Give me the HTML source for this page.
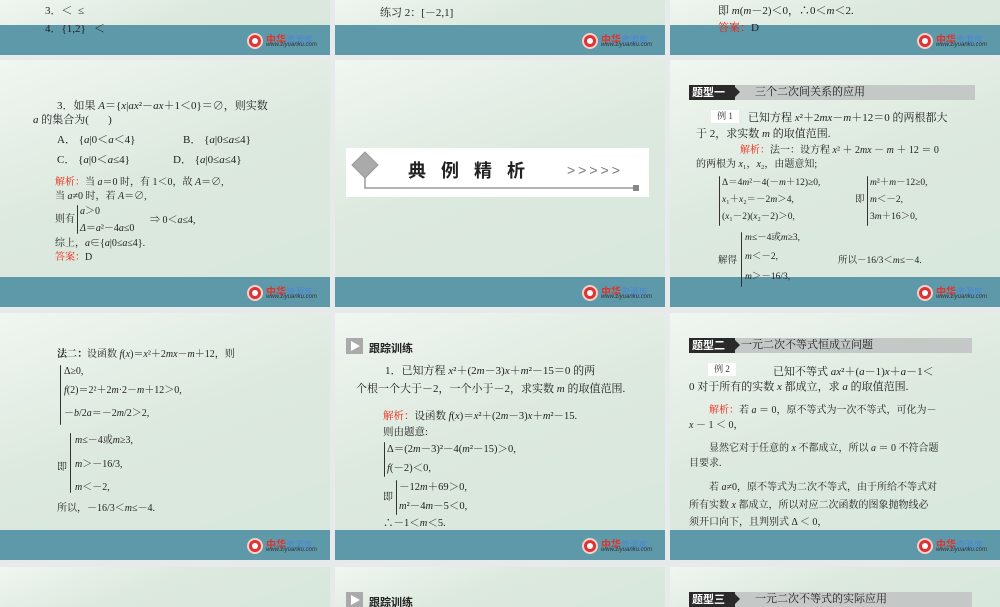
<!DOCTYPE html><html><head><meta charset="utf-8"><style>
*{margin:0;padding:0;box-sizing:border-box}
body{width:1000px;height:600px;background:#e6eaea;position:relative;overflow:hidden;font-family:"Liberation Serif","Noto Serif CJK SC",serif;font-size:11px;color:#222}
.s{position:absolute;width:330px;background:linear-gradient(160deg,#f0f6f0 0%,#dde9df 45%,#d7e7dc 100%);overflow:hidden}
.bar{position:absolute;left:0;width:330px;height:30px;background:#5d99a8}
.logo{position:absolute;left:247px;top:8px;width:80px;height:16px}
.logo .c{position:absolute;left:0;top:0;width:16px;height:16px;border-radius:50%;background:#d33;border:2px solid #f6d0c8}
.logo .c:after{content:"";position:absolute;left:3px;top:3px;width:6px;height:6px;border-radius:50%;background:#fff}
.logo .t1{position:absolute;left:19px;top:-2px;font:bold 10px "Noto Sans CJK SC",sans-serif;color:#d33;white-space:nowrap}
.logo .t1 b{color:#4a86d8;font-weight:normal;font-size:9px}
.logo .t2{position:absolute;left:19px;top:9px;font:italic 6px "Liberation Sans",sans-serif;color:#333}
.t{position:absolute;white-space:nowrap;line-height:13px}
.r{color:#e21}
i{font-style:italic}
.br{position:absolute;border-left:1px solid #333;border-radius:5px 0 0 5px}
.hd{position:absolute;height:15px;background:#c4c8c6}
.hd .k{position:absolute;left:0;top:0;width:46px;height:15px;background:#2a2a2a;color:#fff;font-size:11px;line-height:15px;padding-left:3px;font-family:"Noto Sans CJK SC",sans-serif;font-weight:bold}
.hd .k:after{content:"";position:absolute;right:-5px;top:2px;border-left:5px solid #2a2a2a;border-top:5px solid transparent;border-bottom:5px solid transparent}
.hd .x{position:absolute;left:66px;top:0;line-height:15px;font-size:11px}
.ex{position:absolute;width:28px;height:13px;background:#fff;font-size:9px;line-height:13px;text-align:center;color:#333}
.tr{position:absolute;width:17px;height:16px;background:#aaa}
.tr:after{content:"";position:absolute;left:5px;top:3px;border-left:9px solid #fff;border-top:5px solid transparent;border-bottom:5px solid transparent}
</style></head><body>

<!-- row0 -->
<div class="s" style="left:0;top:0;height:55px"><div class="bar" style="top:25px"><div class="logo"><div class="c"></div><div class="t1">中华<b>资源库</b></div><div class="t2">www.ziyuanku.com</div></div></div>
<div class="t" style="left:45px;top:5px">3．＜ &nbsp;≤</div><div class="t" style="left:45px;top:23px">4．{1,2} &nbsp; ＜</div></div>
<div class="s" style="left:335px;top:0;height:55px"><div class="bar" style="top:25px"><div class="logo"><div class="c"></div><div class="t1">中华<b>资源库</b></div><div class="t2">www.ziyuanku.com</div></div></div>
<div class="t" style="left:45px;top:7px">练习 2：[－2,1]</div></div>
<div class="s" style="left:670px;top:0;height:55px"><div class="bar" style="top:25px"><div class="logo"><div class="c"></div><div class="t1">中华<b>资源库</b></div><div class="t2">www.ziyuanku.com</div></div></div>
<div class="t" style="left:48px;top:5px">即 <i>m</i>(<i>m</i>－2)＜0，∴0＜<i>m</i>＜2.</div><div class="t" style="left:48px;top:22px"><span class="r">答案：</span>D</div></div>

<!-- row1 -->
<div class="s" style="left:0;top:60px;height:247px"><div class="bar" style="top:217px"><div class="logo"><div class="c"></div><div class="t1">中华<b>资源库</b></div><div class="t2">www.ziyuanku.com</div></div></div>
<div class="t" style="left:57px;top:40px">3．如果 <i>A</i>＝{<i>x</i>|<i>ax</i>²－<i>ax</i>＋1＜0}＝∅，则实数</div>
<div class="t" style="left:33px;top:54px"><i>a</i> 的集合为( &nbsp; &nbsp; &nbsp; )</div>
<div class="t" style="left:57px;top:74px">A． {<i>a</i>|0＜<i>a</i>＜4}</div><div class="t" style="left:183px;top:74px">B． {<i>a</i>|0≤<i>a</i>≤4}</div>
<div class="t" style="left:57px;top:94px">C． {<i>a</i>|0＜<i>a</i>≤4}</div><div class="t" style="left:173px;top:94px">D． {<i>a</i>|0≤<i>a</i>≤4}</div>
<div class="t" style="left:55px;top:116px;font-size:10px"><span class="r">解析：</span>当 <i>a</i>＝0 时，有 1＜0，故 <i>A</i>＝∅,</div>
<div class="t" style="left:55px;top:130px;font-size:10px">当 <i>a</i>≠0 时，若 <i>A</i>＝∅,</div>
<div class="t" style="left:55px;top:153px;font-size:10px">则有</div><div class="br" style="left:77px;top:145px;height:29px"></div>
<div class="t" style="left:80px;top:145px;font-size:10px"><i>a</i>＞0</div><div class="t" style="left:80px;top:162px;font-size:10px"><i>Δ</i>＝<i>a</i>²－4<i>a</i>≤0</div>
<div class="t" style="left:150px;top:154px;font-size:10px">⇒ 0＜<i>a</i>≤4,</div>
<div class="t" style="left:55px;top:177px;font-size:10px">综上，<i>a</i>∈{<i>a</i>|0≤<i>a</i>≤4}.</div>
<div class="t" style="left:55px;top:191px;font-size:10px"><span class="r">答案：</span>D</div></div>

<div class="s" style="left:335px;top:60px;height:247px"><div class="bar" style="top:217px"><div class="logo"><div class="c"></div><div class="t1">中华<b>资源库</b></div><div class="t2">www.ziyuanku.com</div></div></div>
<div style="position:absolute;left:11px;top:88px;width:303px;height:49px;background:#fff"></div>
<svg style="position:absolute;left:11px;top:88px" width="303" height="49"><polygon points="19,4 32,17 19,30 6,17" fill="#aaa" stroke="#999"/><polyline points="19,30 19,40 291,40" fill="none" stroke="#999" stroke-width="1.5"/><rect x="287" y="37" width="6" height="6" fill="#888"/></svg>
<div class="t" style="left:73px;top:100px;font:bold 18px 'Noto Sans CJK SC',sans-serif;letter-spacing:15px;line-height:20px">典例精析</div>
<div class="t" style="left:232px;top:102px;font:14px 'Liberation Sans',sans-serif;color:#777;letter-spacing:3px">&gt;&gt;&gt;&gt;&gt;</div></div>

<div class="s" style="left:670px;top:60px;height:247px"><div class="bar" style="top:217px"><div class="logo"><div class="c"></div><div class="t1">中华<b>资源库</b></div><div class="t2">www.ziyuanku.com</div></div></div>
<div class="hd" style="left:19px;top:25px;width:286px"><div class="k">题型一</div><div class="x">三个二次间关系的应用</div></div>
<div class="ex" style="left:41px;top:50px">例 1</div>
<div class="t" style="left:78px;top:52px">已知方程 <i>x</i>²＋2<i>mx</i>－<i>m</i>＋12＝0 的两根都大</div>
<div class="t" style="left:26px;top:68px">于 2，求实数 <i>m</i> 的取值范围.</div>
<div class="t" style="left:70px;top:84px;font-size:10px"><span class="r">解析：</span>法一：设方程 <i>x</i>² ＋ 2<i>mx</i> － <i>m</i> ＋ 12 ＝ 0</div>
<div class="t" style="left:26px;top:98px;font-size:10px">的两根为 <i>x</i>₁，<i>x</i>₂，由题意知;</div>
<div class="br" style="left:49px;top:116px;height:50px"></div>
<div class="t" style="left:52px;top:117px;font-size:9.5px">Δ＝4<i>m</i>²－4(－<i>m</i>＋12)≥0,</div>
<div class="t" style="left:52px;top:134px;font-size:9.5px"><i>x</i>₁＋<i>x</i>₂＝－2<i>m</i>＞4,</div>
<div class="t" style="left:52px;top:151px;font-size:9.5px">(<i>x</i>₁－2)(<i>x</i>₂－2)＞0,</div>
<div class="t" style="left:185px;top:134px;font-size:9.5px">即</div><div class="br" style="left:197px;top:116px;height:50px"></div>
<div class="t" style="left:200px;top:117px;font-size:9.5px"><i>m</i>²＋<i>m</i>－12≥0,</div>
<div class="t" style="left:200px;top:134px;font-size:9.5px"><i>m</i>＜－2,</div>
<div class="t" style="left:200px;top:151px;font-size:9.5px">3<i>m</i>＋16＞0,</div>
<div class="t" style="left:48px;top:195px;font-size:9.5px">解得</div><div class="br" style="left:71px;top:172px;height:55px"></div>
<div class="t" style="left:75px;top:172px;font-size:9.5px"><i>m</i>≤－4或<i>m</i>≥3,</div>
<div class="t" style="left:75px;top:191px;font-size:9.5px"><i>m</i>＜－2,</div>
<div class="t" style="left:75px;top:211px;font-size:9.5px"><i>m</i>＞－16/3,</div>
<div class="t" style="left:168px;top:195px;font-size:9.5px">所以－16/3＜<i>m</i>≤－4.</div></div>

<!-- row2 -->
<div class="s" style="left:0;top:313px;height:247px"><div class="bar" style="top:217px"><div class="logo"><div class="c"></div><div class="t1">中华<b>资源库</b></div><div class="t2">www.ziyuanku.com</div></div></div>
<div class="t" style="left:57px;top:35px;font-size:10px"><b>法二：</b>设函数 <i>f</i>(<i>x</i>)＝<i>x</i>²＋2<i>mx</i>－<i>m</i>＋12，则</div>
<div class="br" style="left:60px;top:52px;height:60px"></div>
<div class="t" style="left:64px;top:52px;font-size:10px">Δ≥0,</div>
<div class="t" style="left:64px;top:71px;font-size:10px"><i>f</i>(2)＝2²＋2<i>m</i>·2－<i>m</i>＋12＞0,</div>
<div class="t" style="left:64px;top:94px;font-size:10px">－<i>b</i>/2<i>a</i>＝－2<i>m</i>/2＞2,</div>
<div class="t" style="left:57px;top:148px;font-size:10px">即</div><div class="br" style="left:70px;top:120px;height:60px"></div>
<div class="t" style="left:75px;top:121px;font-size:10px"><i>m</i>≤－4或<i>m</i>≥3,</div>
<div class="t" style="left:75px;top:145px;font-size:10px"><i>m</i>＞－16/3,</div>
<div class="t" style="left:75px;top:168px;font-size:10px"><i>m</i>＜－2,</div>
<div class="t" style="left:57px;top:189px;font-size:10px">所以，－16/3＜<i>m</i>≤－4.</div></div>

<div class="s" style="left:335px;top:313px;height:247px"><div class="bar" style="top:217px"><div class="logo"><div class="c"></div><div class="t1">中华<b>资源库</b></div><div class="t2">www.ziyuanku.com</div></div></div>
<div class="tr" style="left:11px;top:25px"></div><div class="t" style="left:34px;top:27px;font:bold 11px 'Noto Sans CJK SC',sans-serif">跟踪训练</div>
<div class="t" style="left:50px;top:52px">1．已知方程 <i>x</i>²＋(2<i>m</i>－3)<i>x</i>＋<i>m</i>²－15＝0 的两</div>
<div class="t" style="left:21px;top:70px">个根一个大于－2，一个小于－2，求实数 <i>m</i> 的取值范围.</div>
<div class="t" style="left:48px;top:97px;font-size:10.5px"><span class="r">解析：</span>设函数 <i>f</i>(<i>x</i>)＝<i>x</i>²＋(2<i>m</i>－3)<i>x</i>＋<i>m</i>²－15.</div>
<div class="t" style="left:48px;top:113px;font-size:10.5px">则由题意:</div>
<div class="br" style="left:49px;top:129px;height:35px"></div>
<div class="t" style="left:52px;top:130px;font-size:10.5px">Δ＝(2<i>m</i>－3)²－4(<i>m</i>²－15)＞0,</div>
<div class="t" style="left:52px;top:149px;font-size:10.5px"><i>f</i>(－2)＜0,</div>
<div class="t" style="left:48px;top:178px;font-size:10px">即</div><div class="br" style="left:61px;top:167px;height:35px"></div>
<div class="t" style="left:64px;top:168px;font-size:10.5px">－12<i>m</i>＋69＞0,</div>
<div class="t" style="left:64px;top:187px;font-size:10.5px"><i>m</i>²－4<i>m</i>－5＜0,</div>
<div class="t" style="left:48px;top:204px;font-size:10.5px">∴－1＜<i>m</i>＜5.</div></div>

<div class="s" style="left:670px;top:313px;height:247px"><div class="bar" style="top:217px"><div class="logo"><div class="c"></div><div class="t1">中华<b>资源库</b></div><div class="t2">www.ziyuanku.com</div></div></div>
<div class="hd" style="left:19px;top:25px;width:283px"><div class="k">题型二</div><div class="x" style="left:52px">一元二次不等式恒成立问题</div></div>
<div class="ex" style="left:38px;top:50px">例 2</div>
<div class="t" style="left:103px;top:53px">已知不等式 <i>ax</i>²＋(<i>a</i>－1)<i>x</i>＋<i>a</i>－1＜</div>
<div class="t" style="left:19px;top:68px">0 对于所有的实数 <i>x</i> 都成立，求 <i>a</i> 的取值范围.</div>
<div class="t" style="left:39px;top:91px;font-size:10px"><span class="r">解析：</span>若 <i>a</i> ＝ 0，原不等式为一次不等式，可化为－</div>
<div class="t" style="left:19px;top:106px;font-size:10px"><i>x</i> － 1 ＜ 0，</div>
<div class="t" style="left:39px;top:129px;font-size:10px">显然它对于任意的 <i>x</i> 不都成立，所以 <i>a</i> ＝ 0 不符合题</div>
<div class="t" style="left:19px;top:144px;font-size:10px">目要求.</div>
<div class="t" style="left:39px;top:168px;font-size:10px">若 <i>a</i>≠0，原不等式为二次不等式，由于所给不等式对</div>
<div class="t" style="left:19px;top:186px;font-size:10px">所有实数 <i>x</i> 都成立，所以对应二次函数的图象抛物线必</div>
<div class="t" style="left:19px;top:203px;font-size:10px">须开口向下，且判别式 Δ ＜ 0，</div></div>

<!-- row3 -->
<div class="s" style="left:0;top:567px;height:40px"></div>
<div class="s" style="left:335px;top:567px;height:40px"><div class="tr" style="left:11px;top:25px"></div><div class="t" style="left:34px;top:27px;font:bold 11px 'Noto Sans CJK SC',sans-serif">跟踪训练</div></div>
<div class="s" style="left:670px;top:567px;height:40px"><div class="hd" style="left:19px;top:25px;width:283px"><div class="k">题型三</div><div class="x">一元二次不等式的实际应用</div></div></div>
</body></html>
